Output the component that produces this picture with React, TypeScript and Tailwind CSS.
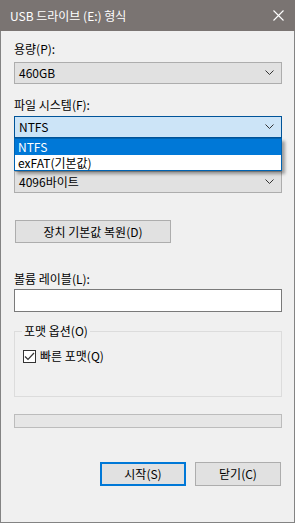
import React from 'react';

const font = "font-['Segoe_UI','Noto_Sans_CJK_KR',sans-serif]";

const Chevron = () => (
  <svg width="9" height="6" viewBox="0 0 9 6" className="shrink-0">
    <path d="M0.5 0.5 L4.5 4.5 L8.5 0.5" fill="none" stroke="#333" strokeWidth="1" />
  </svg>
);

const Combo = ({ value, focused = false }: { value: string; focused?: boolean }) => (
  <div
    className={`h-[22px] w-[268px] flex items-center justify-between pl-[4px] pr-[7px] border ${
      focused ? 'bg-[#cce4f7] border-[#005499]' : 'bg-[#e1e1e1] border-[#adadad]'
    }`}
  >
    <span className="text-[12px] leading-[16px] text-black">{value}</span>
    <Chevron />
  </div>
);

const Label = ({ children, className = '' }: { children: React.ReactNode; className?: string }) => (
  <div className={`text-[12px] leading-[16px] text-black ${className}`}>{children}</div>
);

const App = () => {
  return (
    <div className={`w-[295px] h-[523px] bg-[#f0f0f0] border-x border-b border-[#838383] flex flex-col ${font}`}>
      {/* title bar */}
      <div className="h-[31px] -mx-px bg-[#7a7472] flex items-center justify-between pl-[10px] pr-[11px] shrink-0">
        <span className="text-white text-[12px] leading-[16px]">USB 드라이브 (E:) 형식</span>
        <svg width="11" height="11" viewBox="0 0 11 11">
          <path d="M0.5 0.5 L10.5 10.5 M10.5 0.5 L0.5 10.5" stroke="#fff" strokeWidth="1.1" />
        </svg>
      </div>

      <div className="px-[13px] flex flex-col">
        <Label className="mt-[10px]">용량(P):</Label>
        <div className="mt-[5px]">
          <Combo value="460GB" />
        </div>

        <Label className="mt-[13px]">파일 시스템(F):</Label>
        <div className="mt-[3px] relative">
          <Combo value="NTFS" focused />
          {/* open drop-down list covers the allocation-size label */}
          <div className="absolute left-0 top-[22px] w-[268px] bg-white border border-[#0063b1] shadow-[3px_3px_3px_rgba(0,0,0,0.35)] z-10">
            <div className="h-[16px] bg-[#0078d7] text-white text-[12px] leading-[16px] pl-[3px]">NTFS</div>
            <div className="h-[15px] text-black text-[12px] leading-[15px] pl-[3px]">exFAT(기본값)</div>
          </div>
          <div className="mt-[33px]">
            <Combo value="4096바이트" />
          </div>
        </div>

        <button className="mt-[27px] h-[23px] w-[156px] ml-px bg-[#e1e1e1] border border-[#adadad] text-[12px] leading-[16px] text-black">
          장치 기본값 복원(D)
        </button>

        <Label className="mt-[28px]">볼륨 레이블(L):</Label>
        <div className="mt-[2px] h-[23px] w-[268px] bg-white border border-[#7a7a7a]" />

        <fieldset className="mt-[11px] h-[74px] w-[268px] border border-[#dcdcdc] px-[8px] pt-[9px]">
          <legend className="text-[12px] leading-[16px] text-black px-[2px] -ml-[1px]">포맷 옵션(O)</legend>
          <div className="flex items-center gap-[4px]">
            <div className="w-[13px] h-[13px] border border-[#333] bg-white flex items-center justify-center">
              <svg width="11" height="9" viewBox="0 0 11 9">
                <path d="M1 4.5 L4 7.5 L10 1" fill="none" stroke="#333" strokeWidth="1.2" />
              </svg>
            </div>
            <span className="text-[12px] leading-[16px] text-black">빠른 포맷(Q)</span>
          </div>
        </fieldset>

        <div className="mt-[17px] h-[14px] w-[268px] bg-[#e6e6e6] border border-[#bcbcbc]" />

        <div className="mt-[34px] flex justify-end gap-[9px]">
          <button className="h-[24px] w-[86px] bg-[#e1e1e1] border-2 border-[#0078d7] text-[12px] leading-[16px] text-black">
            시작(S)
          </button>
          <button className="h-[24px] w-[86px] bg-[#e1e1e1] border border-[#adadad] text-[12px] leading-[16px] text-black">
            닫기(C)
          </button>
        </div>
      </div>
    </div>
  );
};

export default App;
